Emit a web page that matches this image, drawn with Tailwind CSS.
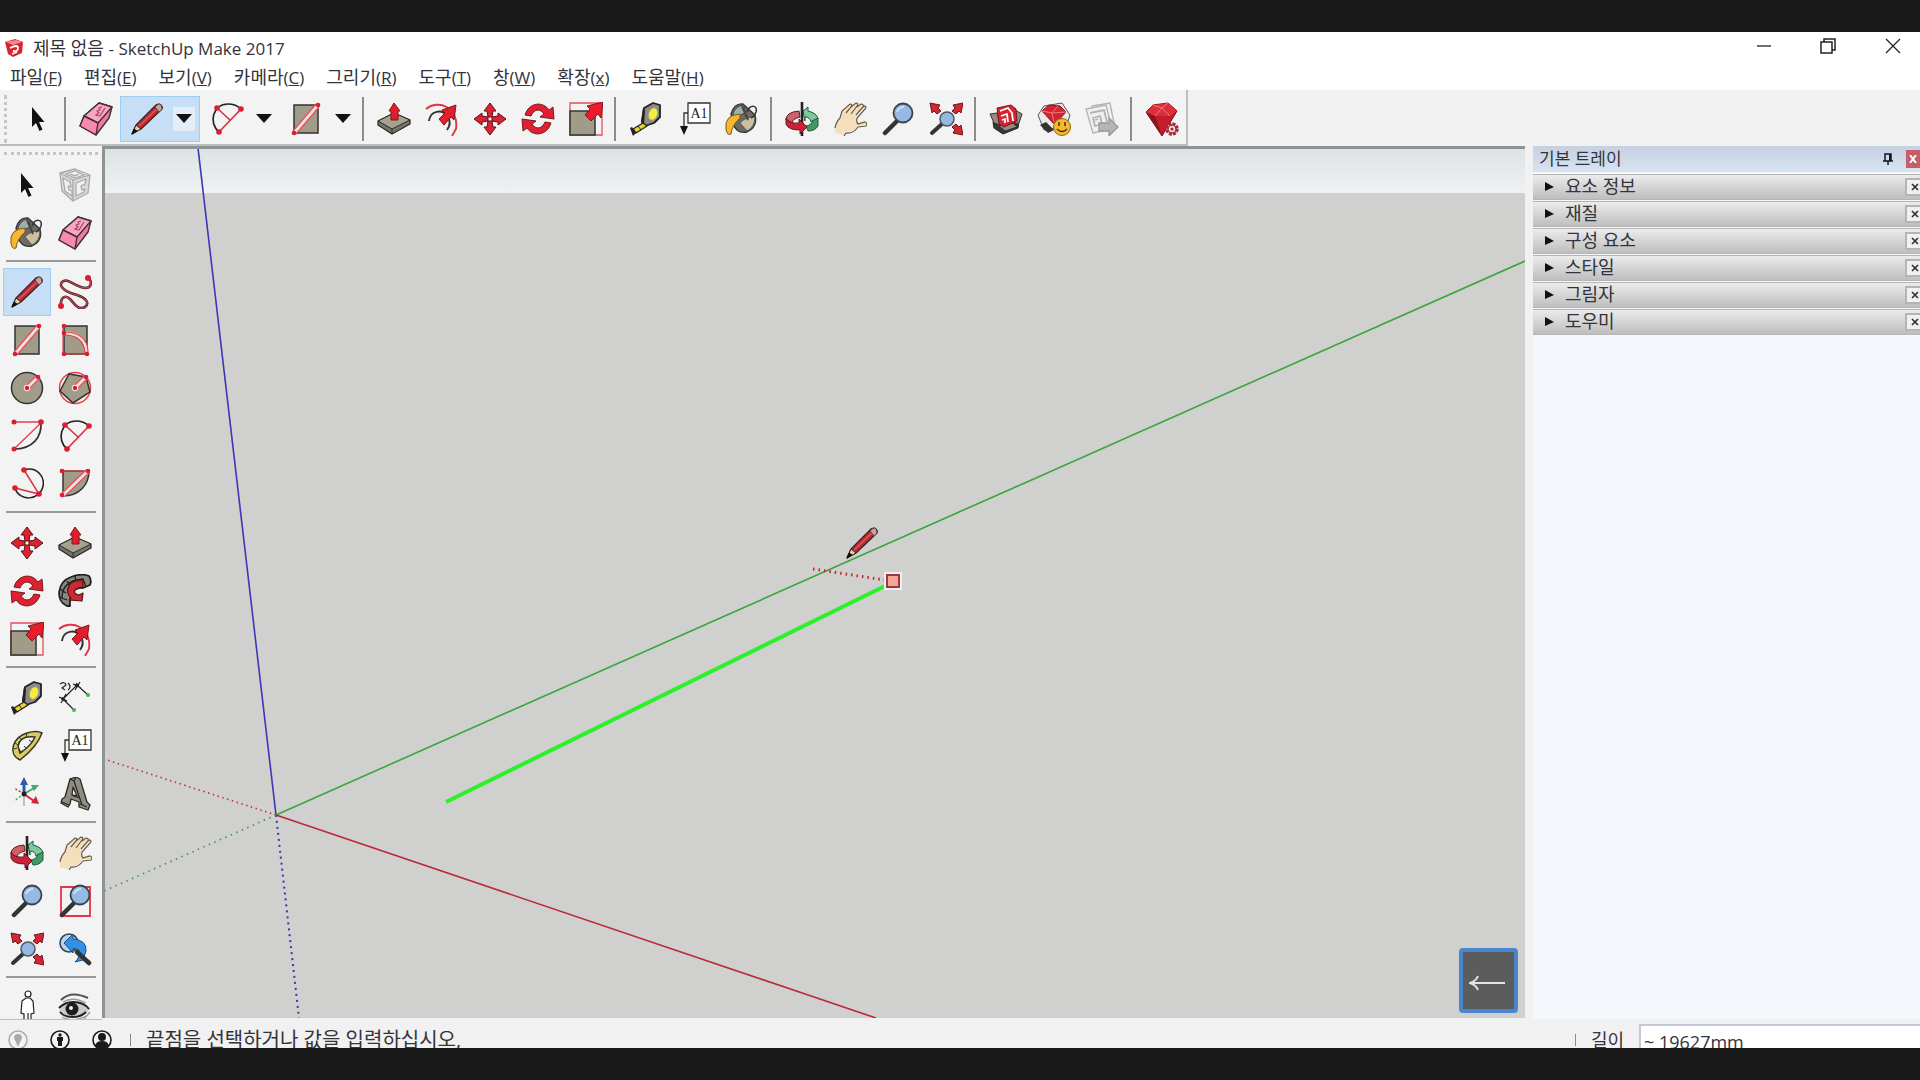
<!DOCTYPE html>
<html lang="ko">
<head>
    <meta charset="UTF-8">
    <meta name="viewport" content="width=device-width, initial-scale=1.0">
    <title>제목 없음 - SketchUp Make 2017</title>
    <script src="https://cdn.jsdelivr.net/npm/@tailwindcss/browser@4"></script>
</head>
<body class="flex h-screen flex-col overflow-hidden bg-[#191919] py-8 font-['Open_Sans','Noto_Sans_CJK_KR',sans-serif] text-lg text-[#33333b]">

    <!-- Icon set, 34 x 34 -->
    <svg class="hidden" xmlns="http://www.w3.org/2000/svg">
        <defs>
            <symbol id="select" viewBox="0 0 34 34">
                <path d="M11 5v20l4-4 3.500 8 3-1.400-3.500-7.600h5.500z" fill="#111"/>
            </symbol>
            <symbol id="eraser" viewBox="0 0 34 34" stroke="#403036" stroke-width="1.400" stroke-linejoin="round">
                <path d="M1 24 5 14 20 1l13 4-3 11-13 17z" fill="#ef7d9f"/>
                <path d="M5 14 20 1l13 4-14 16z" fill="#fba6c0"/>
                <path d="M1 24 5 14l14 7-2 12z" fill="#f98aad"/>
                <path d="m17 13 3-2-2-2 3-1-1-2 3-1m-7 8 5 1 5-8" fill="none" stroke="#a34668" stroke-width="1.200"/>
            </symbol>
            <symbol id="pencil" viewBox="0 0 34 34" stroke-linejoin="round">
                <path d="m2 32 4-9L26 3q3-2 5 0t1 4L11 27z" fill="#c02a30" stroke="#3a2323" stroke-width="1.200"/>
                <path d="m9 24 20-19" stroke="#d95a5e" stroke-width="1.300"/>
                <path d="m25 5 2-2q3-2 4 0t1 4l-3 3z" fill="#c9a3a3" stroke="#5a3f3f"/>
                <path d="m2 32 4-9 5 4z" fill="#e2cfa6" stroke="#3a2323"/>
                <path d="m2 32 2-5 3 2z" fill="#111" stroke="#111"/>
            </symbol>
            <symbol id="freehand" viewBox="0 0 34 34">
                <path d="M3 32C2 21 8 20 12 24s8 12 15 8c5-4 1-9-8-12C8 17 0 12 4 7c6-5 12 5 23 6 8 0 7-9 2-10" fill="none" stroke="#471e25" stroke-width="2.600"/>
                <path d="M3 32C2 21 8 20 12 24s8 12 15 8c5-4 1-9-8-12C8 17 0 12 4 7c6-5 12 5 23 6 8 0 7-9 2-10" fill="none" stroke="#b8444e" stroke-width="1.300"/>
                <circle cx="3" cy="31" r="3" fill="#d81f30"/><circle cx="30" cy="3" r="3" fill="#d81f30"/>
            </symbol>
            <symbol id="rect" viewBox="0 0 34 34">
                <path d="M5 3h24v28H5z" fill="#a19c87" stroke="#333" stroke-width="1.500"/>
                <path d="M5 31 29 3" stroke="#f3dcdc" stroke-width="3.500"/>
                <path d="m4 29 23-27M7 32 30 5" stroke="#e2505a" stroke-width="1.200"/>
                <circle cx="5" cy="31" r="2.300" fill="#d81f30"/><circle cx="29" cy="3" r="2.300" fill="#d81f30"/>
            </symbol>
            <symbol id="rotrect" viewBox="0 0 34 34">
                <path d="M6 3h23v28H6z" fill="#a19c87" stroke="#333" stroke-width="1.500"/>
                <path d="M6 10c14 0 22 6 23 20" fill="none" stroke="#f3dcdc" stroke-width="3.500"/>
                <path d="M6 9c15 0 24 7 24 20M6 12c12 0 20 5 21 18M5 3v28h24" fill="none" stroke="#e2404c" stroke-width="1.200"/>
                <g fill="#d81f30"><circle cx="6" cy="3" r="2.300"/><circle cx="6" cy="10" r="2.300"/><circle cx="6" cy="31" r="2.300"/><circle cx="29" cy="31" r="2.300"/></g>
            </symbol>
            <symbol id="circle" viewBox="0 0 34 34">
                <circle cx="17" cy="17" r="15.500" fill="#a19c87" stroke="#333" stroke-width="1.500"/>
                <path d="M17 17 28 6" stroke="#f3dcdc" stroke-width="3.500"/>
                <path d="M15 16 26 5m-8 14L30 7" stroke="#e2505a" stroke-width="1.200"/>
                <circle cx="17" cy="17" r="2.800" fill="#d81f30" stroke="#fff"/><circle cx="28" cy="6" r="2.300" fill="#d81f30"/>
            </symbol>
            <symbol id="polygon" viewBox="0 0 34 34">
                <circle cx="17" cy="17" r="15.500" fill="#f7e6e6" stroke="#e2404c" stroke-width="1.400"/>
                <path d="M11 3 28 6l4 15-17 11L2 20z" fill="#a19c87" stroke="#333" stroke-width="1.500"/>
                <path d="M17 17 28 6" stroke="#f3dcdc" stroke-width="3.500"/>
                <path d="M15 16 26 5m-8 14L30 7" stroke="#e2505a" stroke-width="1.200"/>
                <circle cx="17" cy="17" r="2.800" fill="#d81f30" stroke="#fff"/><circle cx="28" cy="6" r="2.300" fill="#d81f30"/>
            </symbol>
            <symbol id="arc" viewBox="0 0 34 34">
                <path d="M31 3c1 15-8 27-27 27" fill="none" stroke="#333" stroke-width="1.700"/>
                <path d="M4 3h28L4 30" fill="none" stroke="#dd4450" stroke-width="1.400"/>
                <g fill="#d81f30"><circle cx="4" cy="3" r="2.500"/><circle cx="31" cy="3" r="2.800"/><circle cx="4" cy="30" r="2.500"/></g>
            </symbol>
            <symbol id="arc2" viewBox="0 0 34 34">
                <path d="M9 30C-2 21 3 2 18 2c6 0 10 2 13 5" fill="none" stroke="#222" stroke-width="1.700"/>
                <path d="M9 30 31 7M7 6l13 12" fill="none" stroke="#dd3040" stroke-width="1.700"/>
                <g fill="#d81f30"><circle cx="9" cy="30" r="2.800"/><circle cx="31" cy="7" r="2.800"/><circle cx="7" cy="6" r="2.800"/></g>
            </symbol>
            <symbol id="arc3" viewBox="0 0 34 34">
                <path d="M14 3c13-4 21 7 19 16-3 15-24 16-28 2" fill="none" stroke="#222" stroke-width="1.500"/>
                <path d="m14 3 15 24-24-6" fill="none" stroke="#dd3040" stroke-width="1.500"/>
                <g fill="#d81f30"><circle cx="14" cy="3" r="2.800"/><circle cx="29" cy="27" r="2.800"/><circle cx="5" cy="21" r="2.800"/></g>
            </symbol>
            <symbol id="pie" viewBox="0 0 34 34">
                <path d="M5 4h26c0 14-10 25-26 25z" fill="#a19c87" stroke="#333" stroke-width="1.500"/>
                <path d="M5 28 30 4" stroke="#f3dcdc" stroke-width="3.500"/>
                <path d="m4 26 24-23M7 29 31 6M4 4h26" stroke="#e2505a" stroke-width="1.200"/>
                <g fill="#d81f30"><circle cx="4" cy="4" r="2.300"/><circle cx="30" cy="4" r="2.300"/><circle cx="4" cy="28" r="2.300"/></g>
            </symbol>
            <symbol id="pushpull" viewBox="0 0 34 34" stroke-linejoin="round" stroke="#2d2a28">
                <path d="m1 19 16-8 16 7v4L15 32 1 23z" fill="#77746a" stroke-width="1.300"/>
                <path d="m1 19 16-8 16 7-18 9z" fill="#a6a28e"/>
                <path d="M15 27v5" />
                <path d="m17 1-5 8h2v9h7V9h2z" fill="#e21d2c" stroke="#7a1920"/>
            </symbol>
            <symbol id="offset" viewBox="0 0 34 34" fill="none" stroke-width="1.900">
                <path d="M1 7C13-3 34 5 31 27l-4 7" stroke="#dd3545"/>
                <path d="M4 19c1-10 13-13 19-4 3 5 2 9-1 13" stroke="#333"/>
                <path d="m14 17 5 6 7-8 3 3 2-15-14 5 3 3z" fill="#e21d2c" stroke="#7a1920" stroke-width="1"/>
            </symbol>
            <symbol id="move" viewBox="0 0 34 34">
                <path id="mv" d="m17 1 6 8h-3l-1 6h-4l-1-6h-3z" fill="#dc2130" stroke="#5c1218"/>
                <use href="#mv" transform="rotate(90 17 17)"/><use href="#mv" transform="rotate(180 17 17)"/><use href="#mv" transform="rotate(270 17 17)"/>
            </symbol>
            <symbol id="rotate" viewBox="0 0 34 34">
                <path id="rt" d="M4 13C8 0 22-1 28 8l4-3 1 12-14-2 4-3c-4-6-10-5-13 2z" fill="#df2030" stroke="#7a1920"/>
                <use href="#rt" transform="rotate(180 17 17)"/>
            </symbol>
            <symbol id="scale" viewBox="0 0 34 34">
                <path d="M1 1h32v32H1z" fill="none" stroke="#e2505a" stroke-width="1.300"/>
                <path d="M1 9h25v24H1z" fill="#a19c87" stroke="#333" stroke-width="1.500"/>
                <path d="m16 13 6 6 7-7 3 4 2-16-16 4 3 3z" fill="#ea1c2c" stroke="#7a1920"/>
            </symbol>
            <symbol id="followme" viewBox="0 0 34 34" stroke-linejoin="round">
                <path d="M9 32C-3 27-1 8 13 3q10-4 18-1 3 4 1 9l-7 3q-14-1-13 18z" fill="#8a887c" stroke="#1e1e1e" stroke-width="1.800"/>
                <path d="M4 24C4 13 11 6 25 5l3 8M2 15l6 4m-7 4 8 3M9 7l3 5m5-10 1 6" stroke="#1e1e1e" fill="none" stroke-width="1.300"/>
                <path d="M25 7C10 5 6 17 13 24l-2 2 13 1 1-8-4 2c-7-1-6-7 4-8z" fill="#cf2833" stroke="#571318" stroke-width="1.200"/>
            </symbol>
            <symbol id="tape" viewBox="0 0 34 34" stroke-linejoin="round">
                <path d="m15 6 9-5 7 2v12l-6 6-9 3-3-4z" fill="#8d8a80" stroke="#222" stroke-width="1.800"/>
                <path d="m14 6 2 3-1 13-3-2z" fill="#222"/>
                <ellipse cx="24" cy="12" rx="4.500" ry="6.500" transform="rotate(20 24 12)" fill="#f7ee3c" stroke="#999"/>
                <path d="m14 21 4 3L7 31l-3-4z" fill="#e5d52d" stroke="#222" stroke-width="1.300"/>
                <path d="m3 25 4 6-3 3-3-8z" fill="#222"/><path d="m9 24 3 4" stroke="#222"/>
            </symbol>
            <symbol id="text" viewBox="0 0 34 34">
                <path d="M11 1h22v20H11z" fill="#fff" stroke="#333" stroke-width="1.300"/>
                <path d="M11 11H7v15" fill="none" stroke="#333" stroke-width="1.300"/><path d="M3 24h8L7 33z" fill="#111"/>
                <text x="22" y="16" text-anchor="middle" font-family="Liberation Serif, serif" font-size="14" fill="#222">A1</text>
            </symbol>
            <symbol id="paint" viewBox="0 0 34 34" stroke-linejoin="round">
                <path d="M6 12Q9 1 18 2l12 11q3 12-8 17Q12 32 8 22z" fill="#6b6a66" stroke="#333" stroke-width="1.300"/>
                <path d="M8 11q4-8 11-8l1 8-11 5z" fill="#9dafac" stroke="#444"/>
                <path d="M15 21q6-7 15-6 0 10-8 14z" fill="#cbbf9f" stroke="#555"/>
                <path d="M22 10c3-8 11-7 9 0q-2 5-5 6" fill="none" stroke="#333" stroke-width="1.500"/>
                <path d="M15 12Q-1 13 1 27q1 7 5 5 1-9 9-16z" fill="#f7b731" stroke="#7a5a1a"/>
                <path d="m17 4 6 14" stroke="#444" stroke-width="2"/>
            </symbol>
            <symbol id="orbit" viewBox="0 0 34 34" stroke-linejoin="round">
                <path d="M14 9Q1 10 1 18l6 3q0-4 8-6z" fill="#cc6268" stroke="#5a1a20"/>
                <path d="M18 9l5-4v4q9 2 10 8l-7 3q-1-5-6-5v4z" fill="#7cc99b" stroke="#23573b"/>
                <path d="M33 16v8q-3 5-10 5l-2-5q6-1 6-5z" fill="#3f9b66" stroke="#23573b"/>
                <path d="M17 0v34" stroke="#222" stroke-width="2.600"/>
                <path d="M1 16q3 6 13 5v-4l8 8-7 7v-4Q3 28 1 22z" fill="#cc2138" stroke="#5a1a20"/>
            </symbol>
            <symbol id="pan" viewBox="0 0 34 34">
                <path d="M2 31Q1 24 6 17L9 9l8-7 2 2 5-3 2 2 5-1q3 1 0 4l-8 8 0 6 8-1q3 1 1 4l-8 1q-5 7-12 6l-2 3z" fill="#f4dfbb"/>
                <path d="M2 26Q3 20 7 16L9 9l8-7q3 0 1 3l-5 6m5-6 5-4q3 0 1 3l-6 8m6-7 4-3q3 0 2 3l-7 8m7-8 2-1q2 1 0 3l-8 9q-1 4 1 6l7-2q3 1 1 4l-8 1q-5 7-12 6l-2 3" fill="none" stroke="#68594a" stroke-width="1.200"/>
            </symbol>
            <symbol id="zoom" viewBox="0 0 34 34">
                <path d="M4 31 16 19" stroke="#333" stroke-width="4.500" stroke-linecap="round"/>
                <circle cx="22" cy="11" r="9.500" fill="#95b9e2" stroke="#39434d" stroke-width="1.800"/>
                <path d="M16 10q2-5 7-5" fill="none" stroke="#cfe1f5" stroke-width="2"/>
            </symbol>
            <symbol id="zoomwin" viewBox="0 0 34 34">
                <path d="M3 3h29v29H3z" fill="none" stroke="#e23545" stroke-width="1.800"/><use href="#zoom"/>
            </symbol>
            <symbol id="extents" viewBox="0 0 34 34">
                <path d="M3 31 14 21" stroke="#333" stroke-width="4" stroke-linecap="round"/>
                <circle cx="18" cy="17" r="7" fill="#95b9e2" stroke="#4c5862" stroke-width="1.500"/>
                <path id="ex" d="m1 1 10 2-2 3 3 3-4 3-3-3-2 2z" fill="#d32634" stroke="#6b151c"/>
                <use href="#ex" transform="matrix(-1 0 0 1 35 0)"/><use href="#ex" transform="rotate(180 17.500 17)"/>
            </symbol>
            <symbol id="previous" viewBox="0 0 34 34">
                <circle cx="11" cy="11" r="9" fill="#b9d2ee" stroke="#39434d" stroke-width="1.600"/>
                <path d="M6 11 15 2v5q14 1 13 12l-3 9-8 2q5-4 4-12l-6-2v5z" fill="#3291e4" stroke="#195083"/>
                <path d="m19 20 12 11" stroke="#333" stroke-width="4.500" stroke-linecap="round"/>
            </symbol>
            <symbol id="component" viewBox="0 0 34 34" fill="none" stroke="#a8a8a8" stroke-width="1.300" stroke-linejoin="round">
                <path d="M2 5 17 1l15 6-2 18-15 8L4 23z" fill="#dadada"/>
                <path d="M2 5l13 7 17-5M15 12v21"/>
                <path d="m5 10 7 4 1 5-3-1 1 4 3 1v5l-7-5zm13 5 10-4-1 5-4 2 1 4 3-1-1 3-8 4zM8 6l9-3 9 4-9 3zm4 0 5 2 4-2" fill="#f1f1f1"/>
            </symbol>
            <symbol id="dimension" viewBox="0 0 34 34" fill="none" stroke="#222" stroke-width="1.200">
                <path d="m5 18 14-14 11 10M5 18l10 10M1 16l8 4m-1-7-5 9M15 3l8 4m-1-6-5 8"/>
                <path d="m4 19 2-2m12-12 2-2" stroke-width="3.500"/><path d="M2 3q5-3 6 1l-4 3 3 2M10 2q4 4 0 7"/>
                <g fill="#50b34e" stroke="none"><circle cx="30" cy="14" r="2"/><circle cx="16" cy="29" r="2"/></g>
            </symbol>
            <symbol id="protractor" viewBox="0 0 34 34">
                <path fill-rule="evenodd" d="M10 31C-3 25 3 8 17 4q10-3 15 0Q27 18 10 31zm0-7Q21 17 25 8 10 6 8 17z" fill="#d9ca6a" stroke="#38351d" stroke-width="1.500"/>
                <path d="m4 20 3-1M5 14l3 2m1-8 3 3m4-7 1 4m-5 16-3-4m8 0-3-3m8-4-3-2" stroke="#38351d"/>
            </symbol>
            <symbol id="axes" viewBox="0 0 34 34" fill="none" stroke-width="1.500">
                <path d="M14 17V4" stroke="#2f5ba8" stroke-width="3"/><path d="m14 0-4 8h8z" fill="#2f5ba8"/>
                <path d="m14 17 10-6" stroke="#46a85c" stroke-width="2"/><path d="m29 8-8 0 3 6z" fill="#46a85c"/>
                <path d="m14 17 10 7" stroke="#d32634" stroke-width="2"/><path d="m29 27-3-8-5 7z" fill="#d32634"/>
                <path d="M14 17v12" stroke="#b2c3e2" stroke-width="2"/><path d="M14 17 4 11" stroke="#d32634" stroke-dasharray="2 2"/><path d="M14 17 4 24" stroke="#46a85c" stroke-dasharray="2 2"/>
                <circle cx="14" cy="17" r="2.500" fill="#222"/>
            </symbol>
            <symbol id="text3d" viewBox="0 0 34 34" stroke="#2b2a27" stroke-width="1.300" stroke-linejoin="round">
                <path fill-rule="evenodd" d="m12 2 6-2 4 2 7 23 3 3-2 5-9-3v-5l-8-3-1 5-2 3-7-4 1-4 3-2zm3 8-1 8 5 1z" fill="#8f8d83"/>
                <path d="m12 2 4 2 8 24m-9-9 7 2m-18 4 7 3m11-1 7 3M18 0l-2 4" fill="none"/>
            </symbol>
            <symbol id="person" viewBox="0 0 34 34" stroke="#222" stroke-width="1.200">
                <path d="m12 12 4-3h4l3 3 1 12-3 1v6h-7v-6l-3-1z" fill="#fff"/><circle cx="18" cy="5" r="3" fill="#fff"/>
                <path d="M18 24v7"/><path d="M13 31h9" stroke="#d32634" stroke-width="2"/>
            </symbol>
            <symbol id="eye" viewBox="0 0 34 34">
                <path d="M1 22q4-8 14-9 11 0 17 7-6 9-17 9-9 0-14-7z" fill="#ccc"/>
                <path d="M1 19q6-6 14-6 11 0 16 7M2 23q4 5 13 5 8 0 13-5" fill="none" stroke="#222" stroke-width="2"/>
                <circle cx="14" cy="20" r="6.500" fill="#1c1c1c"/><circle cx="13" cy="19" r="2" fill="#eee"/>
                <path d="M3 11Q13 1 30 9" fill="none" stroke="#555" stroke-width="2"/>
                <path d="M5 13q10-6 23 1M4 28q12 6 24-1m-2 3 6-7" fill="none" stroke="#999" stroke-width="1.300"/>
            </symbol>
            <symbol id="warehouse" viewBox="0 0 34 34" stroke-linejoin="round">
                <path d="m4 20 1 6 9 6 15-6 1-8z" fill="#3a3733" stroke="#222"/>
                <path d="m1 12 7-1 3 12-6-2zM26 8l7 4-3 9-4 1zM10 24l14-3 4 4-12 4z" fill="#97897c" stroke="#333"/>
                <path d="M8 6 22 3l5 4 1 12-13 6-5-3z" fill="#d42431" stroke="#7a1920"/>
                <path d="m11 9 8-3 4 5 1 8M12 14l6-2 1 8m-6-2 3-1v4" fill="none" stroke="#fff" stroke-width="1.800"/>
            </symbol>
            <symbol id="share" viewBox="0 0 34 34" stroke-linejoin="round">
                <path d="m1 13 6-9 18-3 8 12-4 12-22 3z" fill="#ece8e8" stroke="#555"/>
                <path d="m3 23 6-3 8 8-6 3z" fill="#333"/>
                <path d="m5 9 7-6 11 1 6 6-10 11h-3z" fill="#d42431" stroke="#7a1920"/>
                <path d="m5 9 10 2 14-1M15 11l2 9M15 11l6-7" fill="none" stroke="#f07a80"/>
                <circle cx="25" cy="25" r="8.500" fill="#f6b82c" stroke="#8a6514"/>
                <path d="M22 20v4m6-4v4M20 27q5 5 10 0" fill="none" stroke="#4b380c" stroke-width="1.600"/>
            </symbol>
            <symbol id="layout" viewBox="0 0 34 34" fill="#efefef" stroke="#b3b3b3" stroke-width="1.300">
                <path d="m7 4 18-3 5 25-18 3z"/><path d="M1 7 21 3l6 24-19 4z"/>
                <path d="m5 11 14-3 3 12M8 16l7-2 2 8-7 2zm2 2 3-1" fill="none" stroke-width="1.800"/>
                <path d="M14 21h10v-5l9 9-9 9v-5H14z" fill="#b5b5b5" stroke="#999"/>
            </symbol>
            <symbol id="ruby" viewBox="0 0 34 34" stroke-linejoin="round">
                <path d="m1 10 7-7 15-2 9 8-15 25z" fill="#c11d2a" stroke="#741018"/>
                <path d="m1 10 9 4 7 20z" fill="#8d131d"/>
                <path d="m8 3 15-2 9 8-7 5H10l-9-4z" fill="#dd2f38"/>
                <path d="m10 14 7-8 8 8M8 3l9 3 6-5" fill="none" stroke="#f07a7e"/>
                <circle cx="27" cy="27" r="5.500" fill="#f5dcdc" stroke="#a42a36" stroke-width="2.500" stroke-dasharray="3 1.300"/>
                <circle cx="27" cy="27" r="4" fill="#f5dcdc" stroke="#a42a36" stroke-width="1.500"/><circle cx="27" cy="27" r="1.500" fill="#a42a36"/>
            </symbol>
            <symbol id="arrow-down" viewBox="0 0 16 10"><path d="M0 0h16L8 9z" fill="#111"/></symbol>
        </defs>
    </svg>

    <main class="flex min-h-0 flex-1 flex-col overflow-hidden bg-[#f1f1f1]">

        <!-- Title bar -->
        <header class="flex h-8 shrink-0 items-center bg-white pl-1">
            <svg class="mr-[9px] size-5" viewBox="0 0 20 20">
                <path d="m1 4 10-3 8 3-1 11-9 4-5-3z" fill="#d9232d"/>
                <path d="m2 4 10-2 6 2-9 3z" fill="#f4898d"/>
                <path d="M6 10q8-4 8 0t-5 3m-1 3 5-2" fill="none" stroke="#fff" stroke-width="1.800"/>
            </svg>
            <h1 class="leading-8">제목 없음 <span class="text-[17px]">- SketchUp Make 2017</span></h1>
            <div class="ml-auto flex self-start">
                <button class="flex h-7 w-16 items-center justify-center" aria-label="최소화"><svg class="size-4" viewBox="0 0 16 16"><path d="M1 8h14" stroke="#222" stroke-width="1.300"/></svg></button>
                <button class="flex h-7 w-16 items-center justify-center" aria-label="이전 크기로 복원"><svg class="size-4" viewBox="0 0 16 16" fill="none" stroke="#222" stroke-width="1.500"><path d="M1 4h11v11H1zM4 4V1h11v11h-3"/></svg></button>
                <button class="flex h-7 w-15 items-center justify-center pl-[6px]" aria-label="닫기"><svg class="size-4" viewBox="0 0 16 16"><path d="m1 1 14 14M15 1 1 15" stroke="#222" stroke-width="1.300"/></svg></button>
            </div>
        </header>

        <!-- Menu -->
        <nav class="flex h-[26px] shrink-0 gap-[22px] bg-white pl-[10px] leading-[26px]">
            <a href="#">파일<span class="text-[17px]">(<u>F</u>)</span></a>
            <a href="#">편집<span class="text-[17px]">(<u>E</u>)</span></a>
            <a href="#">보기<span class="text-[17px]">(<u>V</u>)</span></a>
            <a href="#">카메라<span class="text-[17px]">(<u>C</u>)</span></a>
            <a href="#">그리기<span class="text-[17px]">(<u>R</u>)</span></a>
            <a href="#">도구<span class="text-[17px]">(<u>T</u>)</span></a>
            <a href="#">창<span class="text-[17px]">(<u>W</u>)</span></a>
            <a href="#">확장<span class="text-[17px]">(<u>x</u>)</span></a>
            <a href="#">도움말<span class="text-[17px]">(<u>H</u>)</span></a>
        </nav>

        <!-- Getting started toolbar -->
        <div class="flex h-14 shrink-0">
            <div class="flex items-center border-r-2 border-b-2 border-[#bdbdbd] bg-[#f3f3f3] pt-1" role="toolbar">
                <div class="ml-1 h-12 w-[11px] border-l-3 border-dotted border-[#c4c4c4]"></div>
                <button class="flex h-[46px] w-[49px] items-center justify-center pr-1" aria-label="선택"><svg class="size-[34px]"><use href="#select"/></svg></button>
                <div class="h-11 w-2 border-l-2 border-[#8c8c8c]"></div>
                <button class="flex h-[46px] w-12 items-center justify-center" aria-label="지우개"><svg class="size-[34px]"><use href="#eraser"/></svg></button>
                <div class="flex h-[46px] w-20 items-center border border-[#9fcdf2] bg-[#c7dff6]">
                    <button class="flex w-[52px] justify-center" aria-label="선"><svg class="size-[34px]"><use href="#pencil"/></svg></button>
                    <button class="flex h-6 w-[22px] items-center justify-center bg-[#e3eefa]" aria-label="선 도구 더 보기"><svg class="h-[10px] w-4"><use href="#arrow-down"/></svg></button>
                </div>
                <div class="flex h-[46px] w-[79px] items-center">
                    <button class="flex w-[53px] justify-center" aria-label="호"><svg class="size-[34px]"><use href="#arc2"/></svg></button>
                    <button class="flex h-6 w-[22px] items-center justify-center" aria-label="호 도구 더 보기"><svg class="h-[10px] w-4"><use href="#arrow-down"/></svg></button>
                </div>
                <div class="flex h-[46px] w-[79px] items-center">
                    <button class="flex w-[53px] justify-center" aria-label="직사각형"><svg class="size-[34px]"><use href="#rect"/></svg></button>
                    <button class="flex h-6 w-[22px] items-center justify-center" aria-label="도형 도구 더 보기"><svg class="h-[10px] w-4"><use href="#arrow-down"/></svg></button>
                </div>
                <div class="ml-1 h-11 w-2 border-l-2 border-[#8c8c8c]"></div>
                <button class="flex w-12 justify-center" aria-label="밀기/끌기"><svg class="size-[34px]"><use href="#pushpull"/></svg></button>
                <button class="flex w-12 justify-center" aria-label="오프셋"><svg class="size-[34px]"><use href="#offset"/></svg></button>
                <button class="flex w-12 justify-center" aria-label="이동"><svg class="size-[34px]"><use href="#move"/></svg></button>
                <button class="flex w-12 justify-center" aria-label="회전"><svg class="size-[34px]"><use href="#rotate"/></svg></button>
                <button class="flex w-12 justify-center" aria-label="배율"><svg class="size-[34px]"><use href="#scale"/></svg></button>
                <div class="ml-1 h-11 w-2 border-l-2 border-[#8c8c8c]"></div>
                <button class="flex w-12 justify-center" aria-label="줄자"><svg class="size-[34px]"><use href="#tape"/></svg></button>
                <button class="flex w-12 justify-center" aria-label="텍스트"><svg class="size-[34px]"><use href="#text"/></svg></button>
                <button class="flex w-12 justify-center" aria-label="페인트통"><svg class="size-[34px]"><use href="#paint"/></svg></button>
                <div class="ml-1 h-11 w-2 border-l-2 border-[#8c8c8c]"></div>
                <button class="flex w-12 justify-center" aria-label="궤도"><svg class="size-[34px]"><use href="#orbit"/></svg></button>
                <button class="flex w-12 justify-center" aria-label="화면 이동"><svg class="size-[34px]"><use href="#pan"/></svg></button>
                <button class="flex w-12 justify-center" aria-label="확대/축소"><svg class="size-[34px]"><use href="#zoom"/></svg></button>
                <button class="flex w-12 justify-center" aria-label="범위 확대/축소"><svg class="size-[34px]"><use href="#extents"/></svg></button>
                <div class="ml-1 h-11 w-2 border-l-2 border-[#8c8c8c]"></div>
                <button class="flex w-12 justify-center" aria-label="3D Warehouse"><svg class="size-[34px]"><use href="#warehouse"/></svg></button>
                <button class="flex w-12 justify-center" aria-label="모델 공유"><svg class="size-[34px]"><use href="#share"/></svg></button>
                <button class="flex w-12 justify-center" aria-label="LayOut으로 보내기"><svg class="size-[34px]"><use href="#layout"/></svg></button>
                <div class="ml-1 h-11 w-2 border-l-2 border-[#8c8c8c]"></div>
                <button class="flex w-12 justify-center" aria-label="Extension Warehouse"><svg class="size-[34px]"><use href="#ruby"/></svg></button>
            </div>
        </div>

        <div class="flex min-h-0 flex-1">
            <!-- Large tool set -->
            <aside class="flex w-[102px] shrink-0 flex-col overflow-hidden border-b border-[#bdbdbd] bg-[#f3f3f3] px-[3px] pt-[6px]">
                <div class="mx-px mb-[6px] h-[3px] shrink-0 border-t-3 border-dotted border-[#c4c4c4]"></div>
                <div class="grid shrink-0 grid-cols-2 auto-rows-[48px]">
                    <button class="flex items-center justify-center" aria-label="선택"><svg class="size-[34px]"><use href="#select"/></svg></button>
                    <button class="flex items-center justify-center" aria-label="구성 요소 만들기"><svg class="size-[34px]"><use href="#component"/></svg></button>
                    <button class="flex items-center justify-center" aria-label="페인트통"><svg class="size-[34px]"><use href="#paint"/></svg></button>
                    <button class="flex items-center justify-center" aria-label="지우개"><svg class="size-[34px]"><use href="#eraser"/></svg></button>
                </div>
                <div class="mx-[3px] mt-[3px] h-2 shrink-0 border-t-2 border-[#9a9a9a]"></div>
                <div class="grid shrink-0 grid-cols-2 auto-rows-[48px]">
                    <button class="flex items-center justify-center border border-[#9fcdf2] bg-[#c7dff6]" aria-label="선"><svg class="size-[34px]"><use href="#pencil"/></svg></button>
                    <button class="flex items-center justify-center" aria-label="손그림"><svg class="size-[34px]"><use href="#freehand"/></svg></button>
                    <button class="flex items-center justify-center" aria-label="직사각형"><svg class="size-[34px]"><use href="#rect"/></svg></button>
                    <button class="flex items-center justify-center" aria-label="회전된 직사각형"><svg class="size-[34px]"><use href="#rotrect"/></svg></button>
                    <button class="flex items-center justify-center" aria-label="원"><svg class="size-[34px]"><use href="#circle"/></svg></button>
                    <button class="flex items-center justify-center" aria-label="다각형"><svg class="size-[34px]"><use href="#polygon"/></svg></button>
                    <button class="flex items-center justify-center" aria-label="호"><svg class="size-[34px]"><use href="#arc"/></svg></button>
                    <button class="flex items-center justify-center" aria-label="2점 호"><svg class="size-[34px]"><use href="#arc2"/></svg></button>
                    <button class="flex items-center justify-center" aria-label="3점 호"><svg class="size-[34px]"><use href="#arc3"/></svg></button>
                    <button class="flex items-center justify-center" aria-label="파이"><svg class="size-[34px]"><use href="#pie"/></svg></button>
                </div>
                <div class="mx-[3px] mt-[3px] h-2 shrink-0 border-t-2 border-[#9a9a9a]"></div>
                <div class="grid shrink-0 grid-cols-2 auto-rows-[48px]">
                    <button class="flex items-center justify-center" aria-label="이동"><svg class="size-[34px]"><use href="#move"/></svg></button>
                    <button class="flex items-center justify-center" aria-label="밀기/끌기"><svg class="size-[34px]"><use href="#pushpull"/></svg></button>
                    <button class="flex items-center justify-center" aria-label="회전"><svg class="size-[34px]"><use href="#rotate"/></svg></button>
                    <button class="flex items-center justify-center" aria-label="따라가기"><svg class="size-[34px]"><use href="#followme"/></svg></button>
                    <button class="flex items-center justify-center" aria-label="배율"><svg class="size-[34px]"><use href="#scale"/></svg></button>
                    <button class="flex items-center justify-center" aria-label="오프셋"><svg class="size-[34px]"><use href="#offset"/></svg></button>
                </div>
                <div class="mx-[3px] mt-[3px] h-2 shrink-0 border-t-2 border-[#9a9a9a]"></div>
                <div class="grid shrink-0 grid-cols-2 auto-rows-[48px]">
                    <button class="flex items-center justify-center" aria-label="줄자"><svg class="size-[34px]"><use href="#tape"/></svg></button>
                    <button class="flex items-center justify-center" aria-label="치수"><svg class="size-[34px]"><use href="#dimension"/></svg></button>
                    <button class="flex items-center justify-center" aria-label="각도기"><svg class="size-[34px]"><use href="#protractor"/></svg></button>
                    <button class="flex items-center justify-center" aria-label="텍스트"><svg class="size-[34px]"><use href="#text"/></svg></button>
                    <button class="flex items-center justify-center" aria-label="축"><svg class="size-[34px]"><use href="#axes"/></svg></button>
                    <button class="flex items-center justify-center" aria-label="3D 텍스트"><svg class="size-[34px]"><use href="#text3d"/></svg></button>
                </div>
                <div class="mx-[3px] mt-[3px] h-2 shrink-0 border-t-2 border-[#9a9a9a]"></div>
                <div class="grid shrink-0 grid-cols-2 auto-rows-[48px]">
                    <button class="flex items-center justify-center" aria-label="궤도"><svg class="size-[34px]"><use href="#orbit"/></svg></button>
                    <button class="flex items-center justify-center" aria-label="화면 이동"><svg class="size-[34px]"><use href="#pan"/></svg></button>
                    <button class="flex items-center justify-center" aria-label="확대/축소"><svg class="size-[34px]"><use href="#zoom"/></svg></button>
                    <button class="flex items-center justify-center" aria-label="확대/축소 창"><svg class="size-[34px]"><use href="#zoomwin"/></svg></button>
                    <button class="flex items-center justify-center" aria-label="범위 확대/축소"><svg class="size-[34px]"><use href="#extents"/></svg></button>
                    <button class="flex items-center justify-center" aria-label="이전"><svg class="size-[34px]"><use href="#previous"/></svg></button>
                </div>
                <div class="mx-[3px] mt-[3px] h-2 shrink-0 border-t-2 border-[#9a9a9a]"></div>
                <div class="grid shrink-0 grid-cols-2 auto-rows-[44px]">
                    <button class="flex items-center justify-center" aria-label="카메라 위치"><svg class="size-[34px]"><use href="#person"/></svg></button>
                    <button class="flex items-center justify-center" aria-label="둘러보기"><svg class="size-[34px]"><use href="#eye"/></svg></button>
                </div>
            </aside>

            <!-- Model viewport -->
            <section class="relative mb-[2px] min-w-0 flex-1 overflow-hidden border-t-3 border-l-3 border-[#8d9292] bg-[#d0d0ce]">
                <svg class="block size-full" viewBox="105 149 1420 869" preserveAspectRatio="xMinYMin slice">
                    <defs>
                        <linearGradient id="sky" x2="0" y2="1">
                            <stop offset="0" stop-color="#dce2e3"/>
                            <stop offset="1" stop-color="#eff1f2"/>
                        </linearGradient>
                    </defs>
                    <path d="M104 148h1421v45H104z" fill="url(#sky)"/>
                    <!-- axes -->
                    <g fill="none" stroke-width="1.600">
                        <path d="m198 148 78 667" stroke="#3b36b4"/>
                        <path d="m276 815 23 203" stroke="#3b36b4" stroke-width="2" stroke-dasharray="2 4"/>
                        <path d="m276 815 1249-554" stroke="#3aa53c"/>
                        <path d="M276 815 104 891" stroke="#3c9a3e" stroke-dasharray="1.500 4.500"/>
                        <path d="m276 815 600 203" stroke="#b92a36"/>
                        <path d="m276 815-172-56" stroke="#c4303c" stroke-dasharray="1.500 3.500"/>
                    </g>
                    <!-- line being drawn -->
                    <path d="m446 802 441-217" stroke="#2df02d" stroke-width="4"/>
                    <path d="m813 569 72 11" stroke="#c2252f" stroke-width="3" stroke-dasharray="1.500 4"/>
                    <path d="M884 572h18v18h-18z" fill="#f6eeee"/>
                    <path d="M887 575h12v12h-12z" fill="#f3a598" stroke="#983a40" stroke-width="2"/>
                    <use href="#pencil" x="845" y="526" width="34" height="34"/>
                </svg>
                <kbd class="absolute right-[7px] bottom-[5px] flex h-[65px] w-[59px] items-center justify-center rounded border-4 border-[#4a86cb] bg-[#5c5c5c] pt-1 pr-1">
                    <svg class="w-9" viewBox="0 0 36 16" fill="none" stroke="#e4e4e4" stroke-width="2"><path d="M2 8h34M9 1Q7 6 1 8q6 2 8 7"/></svg>
                </kbd>
            </section>

            <!-- Default tray -->
            <aside class="mb-px ml-2 flex w-[387px] shrink-0 flex-col overflow-hidden bg-[#f4f7fc]">
                <div class="flex h-[26px] shrink-0 items-center bg-linear-to-b from-[#c5d0e1] to-[#d9e3f1] pl-[6px]">
                    <h2 class="text-[17px] leading-6">기본 트레이</h2>
                    <button class="ml-auto flex size-6 items-center justify-center" aria-label="자동 숨기기"><svg class="size-3" viewBox="0 0 12 12" fill="none" stroke="#15151f" stroke-width="1.500"><path d="M3 8V1h6v7M1 8h10M6 8v4"/><path d="M8 1v7" stroke-width="2"/></svg></button>
                    <button class="ml-[6px] flex h-[18px] w-[14px] items-center justify-center bg-[#c45f69]" aria-label="닫기"><svg class="size-2" viewBox="0 0 8 8"><path d="m1 0 6 8M7 0 1 8" stroke="#fff" stroke-width="2"/></svg></button>
                </div>
                <div class="mt-[2px] flex flex-col gap-px">
                    <div class="flex h-[26px] items-center border-y border-[#b5b5b5] bg-linear-to-b from-[#ececec] to-[#bebebe] pl-3">
                        <button class="flex items-center gap-[11px] pb-[2px] leading-5"><svg class="size-[9px]" viewBox="0 0 9 9"><path d="M0 0v9l9-4z" fill="#111"/></svg>요소 정보</button>
                        <button class="ml-auto flex h-[18px] w-[15px] items-center justify-center border-2 border-r-0 border-[#b5b5b5] bg-[#f0f0f0] pl-[3px]" aria-label="요소 정보 닫기"><svg class="size-2" viewBox="0 0 8 8"><path d="m1 1 6 6M7 1 1 7" stroke="#333" stroke-width="1.700"/></svg></button>
                    </div>
                    <div class="flex h-[26px] items-center border-y border-[#b5b5b5] bg-linear-to-b from-[#ececec] to-[#bebebe] pl-3">
                        <button class="flex items-center gap-[11px] pb-[2px] leading-5"><svg class="size-[9px]" viewBox="0 0 9 9"><path d="M0 0v9l9-4z" fill="#111"/></svg>재질</button>
                        <button class="ml-auto flex h-[18px] w-[15px] items-center justify-center border-2 border-r-0 border-[#b5b5b5] bg-[#f0f0f0] pl-[3px]" aria-label="재질 닫기"><svg class="size-2" viewBox="0 0 8 8"><path d="m1 1 6 6M7 1 1 7" stroke="#333" stroke-width="1.700"/></svg></button>
                    </div>
                    <div class="flex h-[26px] items-center border-y border-[#b5b5b5] bg-linear-to-b from-[#ececec] to-[#bebebe] pl-3">
                        <button class="flex items-center gap-[11px] pb-[2px] leading-5"><svg class="size-[9px]" viewBox="0 0 9 9"><path d="M0 0v9l9-4z" fill="#111"/></svg>구성 요소</button>
                        <button class="ml-auto flex h-[18px] w-[15px] items-center justify-center border-2 border-r-0 border-[#b5b5b5] bg-[#f0f0f0] pl-[3px]" aria-label="구성 요소 닫기"><svg class="size-2" viewBox="0 0 8 8"><path d="m1 1 6 6M7 1 1 7" stroke="#333" stroke-width="1.700"/></svg></button>
                    </div>
                    <div class="flex h-[26px] items-center border-y border-[#b5b5b5] bg-linear-to-b from-[#ececec] to-[#bebebe] pl-3">
                        <button class="flex items-center gap-[11px] pb-[2px] leading-5"><svg class="size-[9px]" viewBox="0 0 9 9"><path d="M0 0v9l9-4z" fill="#111"/></svg>스타일</button>
                        <button class="ml-auto flex h-[18px] w-[15px] items-center justify-center border-2 border-r-0 border-[#b5b5b5] bg-[#f0f0f0] pl-[3px]" aria-label="스타일 닫기"><svg class="size-2" viewBox="0 0 8 8"><path d="m1 1 6 6M7 1 1 7" stroke="#333" stroke-width="1.700"/></svg></button>
                    </div>
                    <div class="flex h-[26px] items-center border-y border-[#b5b5b5] bg-linear-to-b from-[#ececec] to-[#bebebe] pl-3">
                        <button class="flex items-center gap-[11px] pb-[2px] leading-5"><svg class="size-[9px]" viewBox="0 0 9 9"><path d="M0 0v9l9-4z" fill="#111"/></svg>그림자</button>
                        <button class="ml-auto flex h-[18px] w-[15px] items-center justify-center border-2 border-r-0 border-[#b5b5b5] bg-[#f0f0f0] pl-[3px]" aria-label="그림자 닫기"><svg class="size-2" viewBox="0 0 8 8"><path d="m1 1 6 6M7 1 1 7" stroke="#333" stroke-width="1.700"/></svg></button>
                    </div>
                    <div class="flex h-[26px] items-center border-y border-[#b5b5b5] bg-linear-to-b from-[#ececec] to-[#bebebe] pl-3">
                        <button class="flex items-center gap-[11px] pb-[2px] leading-5"><svg class="size-[9px]" viewBox="0 0 9 9"><path d="M0 0v9l9-4z" fill="#111"/></svg>도우미</button>
                        <button class="ml-auto flex h-[18px] w-[15px] items-center justify-center border-2 border-r-0 border-[#b5b5b5] bg-[#f0f0f0] pl-[3px]" aria-label="도우미 닫기"><svg class="size-2" viewBox="0 0 8 8"><path d="m1 1 6 6M7 1 1 7" stroke="#333" stroke-width="1.700"/></svg></button>
                    </div>
                </div>
            </aside>
        </div>

        <!-- Status bar -->
        <footer class="flex h-7 shrink-0 items-start overflow-hidden pl-2">
            <div class="flex h-10 items-center gap-[22px]">
                <button aria-label="지리적 위치"><svg class="size-5" viewBox="0 0 20 20"><circle cx="10" cy="10" r="9" fill="#f3f3f3" stroke="#aaa" stroke-width="1.500"/><path d="M10 17 6 8q0-4 4-4t4 4z" fill="#aaa"/></svg></button>
                <button aria-label="크레딧"><svg class="size-5" viewBox="0 0 20 20"><circle cx="10" cy="10" r="9" fill="#f3f3f3" stroke="#1b1b1b" stroke-width="1.600"/><circle cx="10" cy="5" r="1.700" fill="#1b1b1b"/><path d="M7 7h6v4h-1v5H8v-5H7z" fill="#1b1b1b"/></svg></button>
                <button aria-label="로그인"><svg class="size-5" viewBox="0 0 20 20"><circle cx="10" cy="10" r="9" fill="#f3f3f3" stroke="#1b1b1b" stroke-width="1.600"/><circle cx="10" cy="7" r="4" fill="#1b1b1b"/><path d="M3 16q1-5 7-5t7 5q-7 5-14 0z" fill="#1b1b1b"/></svg></button>
            </div>
            <div class="mt-[14px] ml-[18px] h-3 w-px bg-[#8a8a8a]"></div>
            <p class="ml-[15px] text-xl leading-10">끝점을 선택하거나 값을 입력하십시오,</p>
            <div class="mt-[14px] ml-auto h-3 w-px bg-[#8a8a8a]"></div>
            <label for="length" class="ml-[15px] leading-10">길이</label>
            <input id="length" type="text" value="~ 19627mm" class="mt-1 ml-[15px] h-9 w-[281px] border-2 border-r-0 border-[#c5c8d6] bg-white px-[3px] outline-none">
        </footer>
    </main>
</body>
</html>
